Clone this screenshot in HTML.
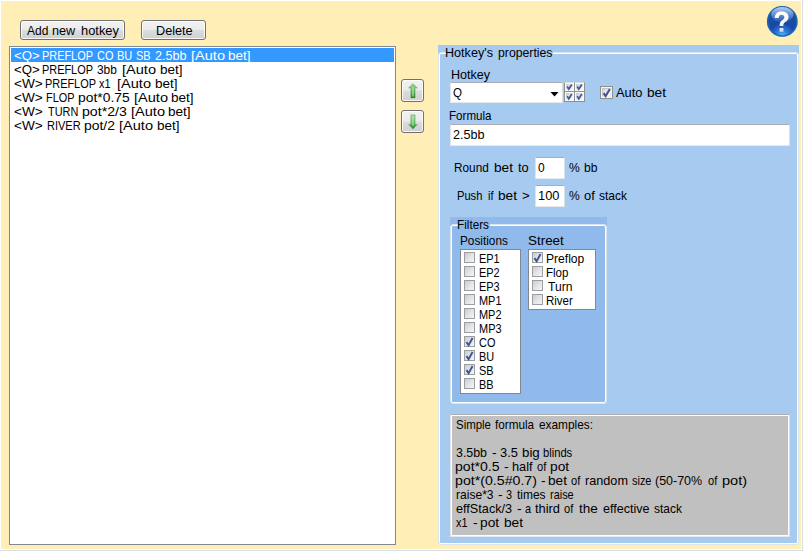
<!DOCTYPE html>
<html><head><meta charset="utf-8"><title>Hotkeys</title>
<style>
html,body{margin:0;padding:0;}
body{width:804px;height:551px;position:relative;overflow:hidden;background:#ffeeb5;font-family:"Liberation Sans",sans-serif;font-size:13px;line-height:14px;color:#000;}
div,span,svg{position:absolute;box-sizing:border-box;}
.t{white-space:pre;transform-origin:0 0;line-height:14px;height:14px;font-size:13px;}
.btn{border:1px solid #707070;border-radius:3px;background:linear-gradient(#f2f2f2 0%,#ebebeb 48%,#dddddd 52%,#cfcfcf 100%);box-shadow:inset 0 0 0 1px rgba(255,255,255,.85);}
.edit{background:#fff;border-top:1px solid #abadb3;border-left:1px solid #e2e3ea;border-right:1px solid #dbdfe6;border-bottom:1px solid #e3e9ef;}
.lb{background:#fff;border:1px solid #828790;}
.cb13{width:13px;height:13px;border:1px solid #8e8f8f;background:#f6f6f6;}
.cbi{left:1px;top:1px;width:9px;height:9px;border:1px solid #c3c7ca;border-right-color:#e6e8ea;border-bottom-color:#eceeef;background:linear-gradient(135deg,#d2d6d9 0%,#eceeef 55%,#fcfcfc 100%);}
.cb11{width:11px;height:11px;border:1px solid #9c9ea0;background:linear-gradient(135deg,#c9cdd1 0%,#e2e4e6 50%,#f4f5f5 100%);}
</style></head><body>
<div style="left:0;top:0;width:804px;height:1px;background:#fff"></div>
<div style="left:0;top:0;width:1px;height:551px;background:#fff"></div>
<div style="left:803px;top:0;width:1px;height:551px;background:#ffffe1"></div>
<div style="left:802px;top:0;width:1px;height:551px;background:#d5dde6"></div>
<div style="left:801px;top:0;width:1px;height:550px;background:#fff"></div>
<div style="left:0;top:550px;width:803px;height:1px;background:#d5dde6"></div>
<div style="left:0;top:549px;width:802px;height:1px;background:#fff"></div>
<div class="btn" style="left:20px;top:20px;width:105px;height:20px"></div>
<div class="btn" style="left:141px;top:20px;width:65px;height:20px"></div>
<div class="lb" style="left:9px;top:46px;width:387px;height:499px"></div>
<div style="left:11px;top:48px;width:383px;height:14px;background:#3399ff"></div>
<div class="btn" style="left:401px;top:79px;width:23px;height:23px"><svg width="21" height="21" viewBox="0 0 21 21" style="left:0;top:0"><defs><linearGradient id="g1" x1="0" y1="0" x2="0" y2="1"><stop offset="0" stop-color="#96d896"/><stop offset="0.55" stop-color="#5ab65a"/><stop offset="1" stop-color="#247c24"/></linearGradient><linearGradient id="g2" x1="0" y1="0" x2="0" y2="1"><stop offset="0" stop-color="#98d898"/><stop offset="0.6" stop-color="#5eb85e"/><stop offset="1" stop-color="#2c862c"/></linearGradient></defs><path d="M10.95 3.5 L15.4 8.1 L13.1 8.1 L13.1 17.9 L8.8 17.9 L8.8 8.1 L6.5 8.1 Z" fill="url(#g1)" stroke="#3c9a3c" stroke-opacity="0.55" stroke-width="0.6"/><rect x="10.2" y="7" width="1.5" height="9.6" fill="#d0f0d0" opacity="0.65"/></svg></div>
<div class="btn" style="left:401px;top:110px;width:23px;height:23px"><svg width="21" height="21" viewBox="0 0 21 21" style="left:0;top:0"><path d="M8.8 3.8 L13.1 3.8 L13.1 13.5 L15.4 13.5 L10.95 18.1 L6.5 13.5 L8.8 13.5 Z" fill="url(#g2)" stroke="#3c9a3c" stroke-opacity="0.55" stroke-width="0.6"/><rect x="10.2" y="5" width="1.5" height="9.6" fill="#d0f0d0" opacity="0.65"/></svg></div>
<svg width="36" height="36" viewBox="0 0 36 36" style="left:764px;top:3px">
<defs>
<radialGradient id="hg" cx="0.5" cy="1.0" r="0.8"><stop offset="0" stop-color="#52b6f6"/><stop offset="0.28" stop-color="#2b78da"/><stop offset="0.55" stop-color="#1a47a6"/><stop offset="1" stop-color="#1c4ea8"/></radialGradient>
<linearGradient id="hl" x1="0" y1="0" x2="0" y2="1"><stop offset="0" stop-color="#cfe4ff" stop-opacity="0.85"/><stop offset="1" stop-color="#9cc4f4" stop-opacity="0.1"/></linearGradient>
<linearGradient id="hq" x1="0" y1="0" x2="0" y2="1"><stop offset="0" stop-color="#ffffff"/><stop offset="0.6" stop-color="#f4f8fd"/><stop offset="1" stop-color="#c9d6ee"/></linearGradient>
</defs>
<circle cx="18.3" cy="18.4" r="15.6" fill="#7cc6ea" opacity="0.55"/>
<circle cx="18.3" cy="18.4" r="14.6" fill="url(#hg)" stroke="#1c66ae" stroke-width="1.5"/>
<ellipse cx="18.3" cy="11.6" rx="11.2" ry="7.6" fill="url(#hl)"/>
<path transform="translate(-1.58,1.25) scale(1.105,1.036)" d="M11.2 13.2 C11.2 8.8 14 7 17.4 7 C21 7 23.6 9 23.6 12.2 C23.6 15 21.8 16.2 20.4 17.4 C19.2 18.4 18.9 19.2 18.9 21 L15.6 21 C15.6 18.4 16 17.2 17.6 15.8 C18.9 14.7 19.9 13.9 19.9 12.4 C19.9 11 18.9 10.1 17.4 10.1 C15.8 10.1 14.8 11.1 14.7 13.2 Z M15.5 23 L19 23 L19 26.6 L15.5 26.6 Z" fill="url(#hq)"/>
</svg>
<div style="left:438px;top:45px;width:361px;height:9px;background:#a6caf0"></div>
<div style="left:438px;top:52px;width:361px;height:493px;border:1px solid #dce3e9;border-radius:3px"></div>
<div style="left:439px;top:53px;width:359px;height:491px;background:#a6caf0;border:1px solid #fff;border-radius:2px"></div>
<div style="left:446px;top:52px;width:107px;height:2px;background:#a6caf0"></div>
<div class="edit" style="left:450px;top:82px;width:113px;height:21px"></div>
<svg width="9" height="5" viewBox="0 0 9 5" style="left:550px;top:92px"><path d="M0.5 0 L8.5 0 L4.5 4.5 Z" fill="#000"/></svg>
<div style="left:564px;top:82px;width:11px;height:10px;border:1px solid #8e8f8f;border-top-color:#dcdcdc;background:#fbfbfb"><div style="left:1px;top:1px;width:7px;height:6px;background:linear-gradient(135deg,#c3c8cd,#e9ebed 55%,#fafafa)"></div><svg width="9" height="8" viewBox="0 0 9 8" style="left:0;top:0"><path d="M2.2 3.5 L3.8 6.1 L6.8 1.5" fill="none" stroke="#43589a" stroke-width="1.75"/></svg></div>
<div style="left:564px;top:91px;width:11px;height:11px;border:1px solid #8e8f8f;background:#fbfbfb"><div style="left:1px;top:1px;width:7px;height:7px;background:linear-gradient(135deg,#c3c8cd,#e9ebed 55%,#fafafa)"></div><svg width="9" height="9" viewBox="0 0 9 9" style="left:0;top:0"><path d="M2.2 4.1 L3.8 6.9 L6.8 2.0" fill="none" stroke="#43589a" stroke-width="1.75"/></svg></div>
<div style="left:574px;top:82px;width:11px;height:10px;border:1px solid #8e8f8f;border-top-color:#dcdcdc;background:#fbfbfb"><div style="left:1px;top:1px;width:7px;height:6px;background:linear-gradient(135deg,#c3c8cd,#e9ebed 55%,#fafafa)"></div><svg width="9" height="8" viewBox="0 0 9 8" style="left:0;top:0"><path d="M2.2 3.5 L3.8 6.1 L6.8 1.5" fill="none" stroke="#43589a" stroke-width="1.75"/></svg></div>
<div style="left:574px;top:91px;width:11px;height:11px;border:1px solid #8e8f8f;background:#fbfbfb"><div style="left:1px;top:1px;width:7px;height:7px;background:linear-gradient(135deg,#c3c8cd,#e9ebed 55%,#fafafa)"></div><svg width="9" height="9" viewBox="0 0 9 9" style="left:0;top:0"><path d="M2.2 4.1 L3.8 6.9 L6.8 2.0" fill="none" stroke="#43589a" stroke-width="1.75"/></svg></div>
<div class="cb13" style="left:600px;top:86px"><div class="cbi"></div><svg width="13" height="13" viewBox="0 0 13 13" style="left:-1px;top:-1px"><path d="M3.5 7.1 L5.6 10.1 L9.9 2.9" fill="none" stroke="#3f5496" stroke-width="2.0"/></svg></div>
<div class="edit" style="left:450px;top:124px;width:340px;height:22px"></div>
<div class="edit" style="left:535px;top:157px;width:30px;height:22px"></div>
<div class="edit" style="left:535px;top:185px;width:30px;height:22px"></div>
<div style="left:450px;top:217px;width:157px;height:9px;background:#90baec"></div>
<div style="left:450px;top:224px;width:157px;height:180px;border:1px solid #dce3e9;border-radius:3px"></div>
<div style="left:451px;top:225px;width:155px;height:178px;background:#90baec;border:1px solid #fff;border-radius:2px"></div>
<div style="left:458px;top:224px;width:32px;height:2px;background:#90baec"></div>
<div class="lb" style="left:460px;top:249px;width:61px;height:145px"></div>
<div class="cb11" style="left:464px;top:252px"></div>
<div class="cb11" style="left:464px;top:266px"></div>
<div class="cb11" style="left:464px;top:280px"></div>
<div class="cb11" style="left:464px;top:294px"></div>
<div class="cb11" style="left:464px;top:308px"></div>
<div class="cb11" style="left:464px;top:322px"></div>
<div class="cb11" style="left:464px;top:336px"><svg width="11" height="11" viewBox="0 0 11 11" style="position:absolute;left:-1px;top:-1px"><path d="M2.5 6.1 L4.6 9.1 L8.6 2.0" fill="none" stroke="#3f5496" stroke-width="1.9"/></svg></div>
<div class="cb11" style="left:464px;top:350px"><svg width="11" height="11" viewBox="0 0 11 11" style="position:absolute;left:-1px;top:-1px"><path d="M2.5 6.1 L4.6 9.1 L8.6 2.0" fill="none" stroke="#3f5496" stroke-width="1.9"/></svg></div>
<div class="cb11" style="left:464px;top:364px"><svg width="11" height="11" viewBox="0 0 11 11" style="position:absolute;left:-1px;top:-1px"><path d="M2.5 6.1 L4.6 9.1 L8.6 2.0" fill="none" stroke="#3f5496" stroke-width="1.9"/></svg></div>
<div class="cb11" style="left:464px;top:378px"></div>
<div class="lb" style="left:528px;top:249px;width:68px;height:61px"></div>
<div class="cb11" style="left:532px;top:252px"><svg width="11" height="11" viewBox="0 0 11 11" style="position:absolute;left:-1px;top:-1px"><path d="M2.5 6.1 L4.6 9.1 L8.6 2.0" fill="none" stroke="#3f5496" stroke-width="1.9"/></svg></div>
<div class="cb11" style="left:532px;top:266px"></div>
<div class="cb11" style="left:532px;top:280px"></div>
<div class="cb11" style="left:532px;top:294px"></div>
<div class="edit" style="left:450px;top:414px;width:340px;height:123px"><div style="left:1px;top:1px;width:336px;height:119px;background:#c0c0c0"></div></div>
<span class="t" style="left:27.00px;top:24px;transform:scaleX(0.9239);">Add</span>
<span class="t" style="left:52.00px;top:24px;transform:scaleX(0.9751);">new</span>
<span class="t" style="left:81.00px;top:24px;transform:scaleX(0.9904);">hotkey</span>
<span class="t" style="left:156.00px;top:24px;transform:scaleX(0.9743);">Delete</span>
<span class="t" style="left:14.00px;top:49px;color:#fff;transform:scaleX(1.0149);">&lt;Q&gt;</span>
<span class="t" style="left:42.00px;top:49px;color:#fff;transform:scaleX(0.8400);">PREFLOP</span>
<span class="t" style="left:97.00px;top:49px;color:#fff;transform:scaleX(0.8400);">CO</span>
<span class="t" style="left:117.00px;top:49px;color:#fff;transform:scaleX(0.8489);">BU</span>
<span class="t" style="left:136.00px;top:49px;color:#fff;transform:scaleX(0.8404);">SB</span>
<span class="t" style="left:155.00px;top:49px;color:#fff;transform:scaleX(0.9720);">2.5bb</span>
<span class="t" style="left:191.00px;top:49px;color:#fff;transform:scaleX(1.1200);">[Auto</span>
<span class="t" style="left:228.00px;top:49px;color:#fff;transform:scaleX(1.0419);">bet]</span>
<span class="t" style="left:14.00px;top:63px;transform:scaleX(1.0149);">&lt;Q&gt;</span>
<span class="t" style="left:42.00px;top:63px;transform:scaleX(0.8400);">PREFLOP</span>
<span class="t" style="left:97.00px;top:63px;transform:scaleX(0.9159);">3bb</span>
<span class="t" style="left:122.00px;top:63px;transform:scaleX(1.1200);">[Auto</span>
<span class="t" style="left:160.00px;top:63px;transform:scaleX(1.0419);">bet]</span>
<span class="t" style="left:14.00px;top:77px;transform:scaleX(1.0501);">&lt;W&gt;</span>
<span class="t" style="left:45.00px;top:77px;transform:scaleX(0.8400);">PREFLOP</span>
<span class="t" style="left:99.00px;top:77px;transform:scaleX(0.8400);">x1</span>
<span class="t" style="left:117.00px;top:77px;transform:scaleX(1.1200);">[Auto</span>
<span class="t" style="left:155.00px;top:77px;transform:scaleX(1.0419);">bet]</span>
<span class="t" style="left:14.00px;top:91px;transform:scaleX(1.0501);">&lt;W&gt;</span>
<span class="t" style="left:46.00px;top:91px;transform:scaleX(0.8400);">FLOP</span>
<span class="t" style="left:78.00px;top:91px;transform:scaleX(1.0668);">pot*0.75</span>
<span class="t" style="left:134.00px;top:91px;transform:scaleX(1.1200);">[Auto</span>
<span class="t" style="left:171.00px;top:91px;transform:scaleX(1.0419);">bet]</span>
<span class="t" style="left:14.00px;top:105px;transform:scaleX(1.0501);">&lt;W&gt;</span>
<span class="t" style="left:48.00px;top:105px;transform:scaleX(0.8400);">TURN</span>
<span class="t" style="left:82.00px;top:105px;transform:scaleX(1.0885);">pot*2/3</span>
<span class="t" style="left:131.00px;top:105px;transform:scaleX(1.1200);">[Auto</span>
<span class="t" style="left:168.00px;top:105px;transform:scaleX(1.0419);">bet]</span>
<span class="t" style="left:14.00px;top:119px;transform:scaleX(1.0501);">&lt;W&gt;</span>
<span class="t" style="left:47.00px;top:119px;transform:scaleX(0.8475);">RIVER</span>
<span class="t" style="left:84.00px;top:119px;transform:scaleX(1.0721);">pot/2</span>
<span class="t" style="left:119.00px;top:119px;transform:scaleX(1.1200);">[Auto</span>
<span class="t" style="left:157.00px;top:119px;transform:scaleX(1.0419);">bet]</span>
<span class="t" style="left:445.00px;top:46px;transform:scaleX(0.9696);">Hotkey&#x27;s</span>
<span class="t" style="left:498.00px;top:46px;transform:scaleX(0.9428);">properties</span>
<span class="t" style="left:451.00px;top:68px;transform:scaleX(0.9665);">Hotkey</span>
<span class="t" style="left:453.00px;top:86px;transform:scaleX(0.8882);">Q</span>
<span class="t" style="left:616.00px;top:86px;transform:scaleX(0.9876);">Auto</span>
<span class="t" style="left:647.00px;top:86px;transform:scaleX(1.0522);">bet</span>
<span class="t" style="left:449.00px;top:109px;transform:scaleX(0.8921);">Formula</span>
<span class="t" style="left:453.00px;top:128px;transform:scaleX(0.9720);">2.5bb</span>
<span class="t" style="left:454.00px;top:161px;transform:scaleX(0.9069);">Round</span>
<span class="t" style="left:494.00px;top:161px;transform:scaleX(1.0522);">bet</span>
<span class="t" style="left:518.00px;top:161px;transform:scaleX(0.9880);">to</span>
<span class="t" style="left:538.00px;top:161px;transform:scaleX(0.9231);">0</span>
<span class="t" style="left:569.00px;top:161px;transform:scaleX(0.9292);">%</span>
<span class="t" style="left:584.00px;top:161px;transform:scaleX(0.9298);">bb</span>
<span class="t" style="left:457.00px;top:189px;transform:scaleX(0.8561);">Push</span>
<span class="t" style="left:488.00px;top:189px;transform:scaleX(0.8400);">if</span>
<span class="t" style="left:498.00px;top:189px;transform:scaleX(1.0522);">bet</span>
<span class="t" style="left:522.00px;top:189px;transform:scaleX(1.0082);">&gt;</span>
<span class="t" style="left:538.00px;top:189px;transform:scaleX(0.9875);">100</span>
<span class="t" style="left:569.00px;top:189px;transform:scaleX(0.9292);">%</span>
<span class="t" style="left:584.00px;top:189px;transform:scaleX(0.9916);">of</span>
<span class="t" style="left:599.00px;top:189px;transform:scaleX(0.9229);">stack</span>
<span class="t" style="left:457.00px;top:218px;transform:scaleX(0.9023);">Filters</span>
<span class="t" style="left:460.00px;top:234px;transform:scaleX(0.9079);">Positions</span>
<span class="t" style="left:528.00px;top:234px;transform:scaleX(1.0319);">Street</span>
<span class="t" style="left:478.60px;top:252px;transform:scaleX(0.8400);">EP1</span>
<span class="t" style="left:478.60px;top:266px;transform:scaleX(0.8415);">EP2</span>
<span class="t" style="left:478.60px;top:280px;transform:scaleX(0.8400);">EP3</span>
<span class="t" style="left:478.60px;top:294px;transform:scaleX(0.8400);">MP1</span>
<span class="t" style="left:478.60px;top:308px;transform:scaleX(0.8416);">MP2</span>
<span class="t" style="left:478.60px;top:322px;transform:scaleX(0.8432);">MP3</span>
<span class="t" style="left:478.60px;top:336px;transform:scaleX(0.8400);">CO</span>
<span class="t" style="left:478.60px;top:350px;transform:scaleX(0.8400);">BU</span>
<span class="t" style="left:478.60px;top:364px;transform:scaleX(0.8403);">SB</span>
<span class="t" style="left:478.60px;top:378px;transform:scaleX(0.8400);">BB</span>
<span class="t" style="left:546.20px;top:252px;transform:scaleX(0.9290);">Preflop</span>
<span class="t" style="left:546.20px;top:266px;transform:scaleX(0.8848);">Flop</span>
<span class="t" style="left:548.40px;top:280px;transform:scaleX(0.9314);">Turn</span>
<span class="t" style="left:546.20px;top:294px;transform:scaleX(0.8840);">River</span>
<span class="t" style="left:456.00px;top:418px;transform:scaleX(0.8797);">Simple</span>
<span class="t" style="left:495.00px;top:418px;transform:scaleX(0.9021);">formula</span>
<span class="t" style="left:539.00px;top:418px;transform:scaleX(0.9108);">examples:</span>
<span class="t" style="left:456.00px;top:446px;transform:scaleX(0.9519);">3.5bb</span>
<span class="t" style="left:492.00px;top:446px;transform:scaleX(1.0823);">-</span>
<span class="t" style="left:500.00px;top:446px;transform:scaleX(0.9924);">3.5</span>
<span class="t" style="left:522.00px;top:446px;transform:scaleX(1.0211);">big</span>
<span class="t" style="left:543.00px;top:446px;transform:scaleX(0.8600);">blinds</span>
<span class="t" style="left:455.00px;top:460px;transform:scaleX(1.0823);">pot*0.5</span>
<span class="t" style="left:504.00px;top:460px;transform:scaleX(1.0823);">-</span>
<span class="t" style="left:512.00px;top:460px;transform:scaleX(0.9836);">half</span>
<span class="t" style="left:537.00px;top:460px;transform:scaleX(0.8538);">of</span>
<span class="t" style="left:550.00px;top:460px;transform:scaleX(1.0570);">pot</span>
<span class="t" style="left:455.00px;top:474px;transform:scaleX(1.0899);">pot*(0.5#0.7)</span>
<span class="t" style="left:541.00px;top:474px;transform:scaleX(1.0823);">-</span>
<span class="t" style="left:548.00px;top:474px;transform:scaleX(1.0522);">bet</span>
<span class="t" style="left:571.00px;top:474px;transform:scaleX(0.8538);">of</span>
<span class="t" style="left:585.00px;top:474px;transform:scaleX(0.9740);">random</span>
<span class="t" style="left:632.00px;top:474px;transform:scaleX(0.8400);">size</span>
<span class="t" style="left:655.00px;top:474px;transform:scaleX(0.9588);">(50-70%</span>
<span class="t" style="left:708.00px;top:474px;transform:scaleX(0.8538);">of</span>
<span class="t" style="left:722.00px;top:474px;transform:scaleX(1.1200);">pot)</span>
<span class="t" style="left:456.00px;top:488px;transform:scaleX(0.9277);">raise*3</span>
<span class="t" style="left:498.00px;top:488px;transform:scaleX(1.0823);">-</span>
<span class="t" style="left:506.00px;top:488px;transform:scaleX(0.8400);">3</span>
<span class="t" style="left:517.00px;top:488px;transform:scaleX(0.9195);">times</span>
<span class="t" style="left:550.00px;top:488px;transform:scaleX(0.8400);">raise</span>
<span class="t" style="left:456.00px;top:502px;transform:scaleX(0.9748);">effStack/3</span>
<span class="t" style="left:517.00px;top:502px;transform:scaleX(1.0823);">-</span>
<span class="t" style="left:525.00px;top:502px;transform:scaleX(0.8400);">a</span>
<span class="t" style="left:535.00px;top:502px;transform:scaleX(0.9890);">third</span>
<span class="t" style="left:564.00px;top:502px;transform:scaleX(0.8538);">of</span>
<span class="t" style="left:579.00px;top:502px;transform:scaleX(1.0414);">the</span>
<span class="t" style="left:603.00px;top:502px;transform:scaleX(0.9646);">effective</span>
<span class="t" style="left:654.00px;top:502px;transform:scaleX(0.9229);">stack</span>
<span class="t" style="left:456.00px;top:516px;transform:scaleX(0.8400);">x1</span>
<span class="t" style="left:473.00px;top:516px;transform:scaleX(1.0823);">-</span>
<span class="t" style="left:480.00px;top:516px;transform:scaleX(1.0570);">pot</span>
<span class="t" style="left:504.00px;top:516px;transform:scaleX(1.0522);">bet</span>
</body></html>
